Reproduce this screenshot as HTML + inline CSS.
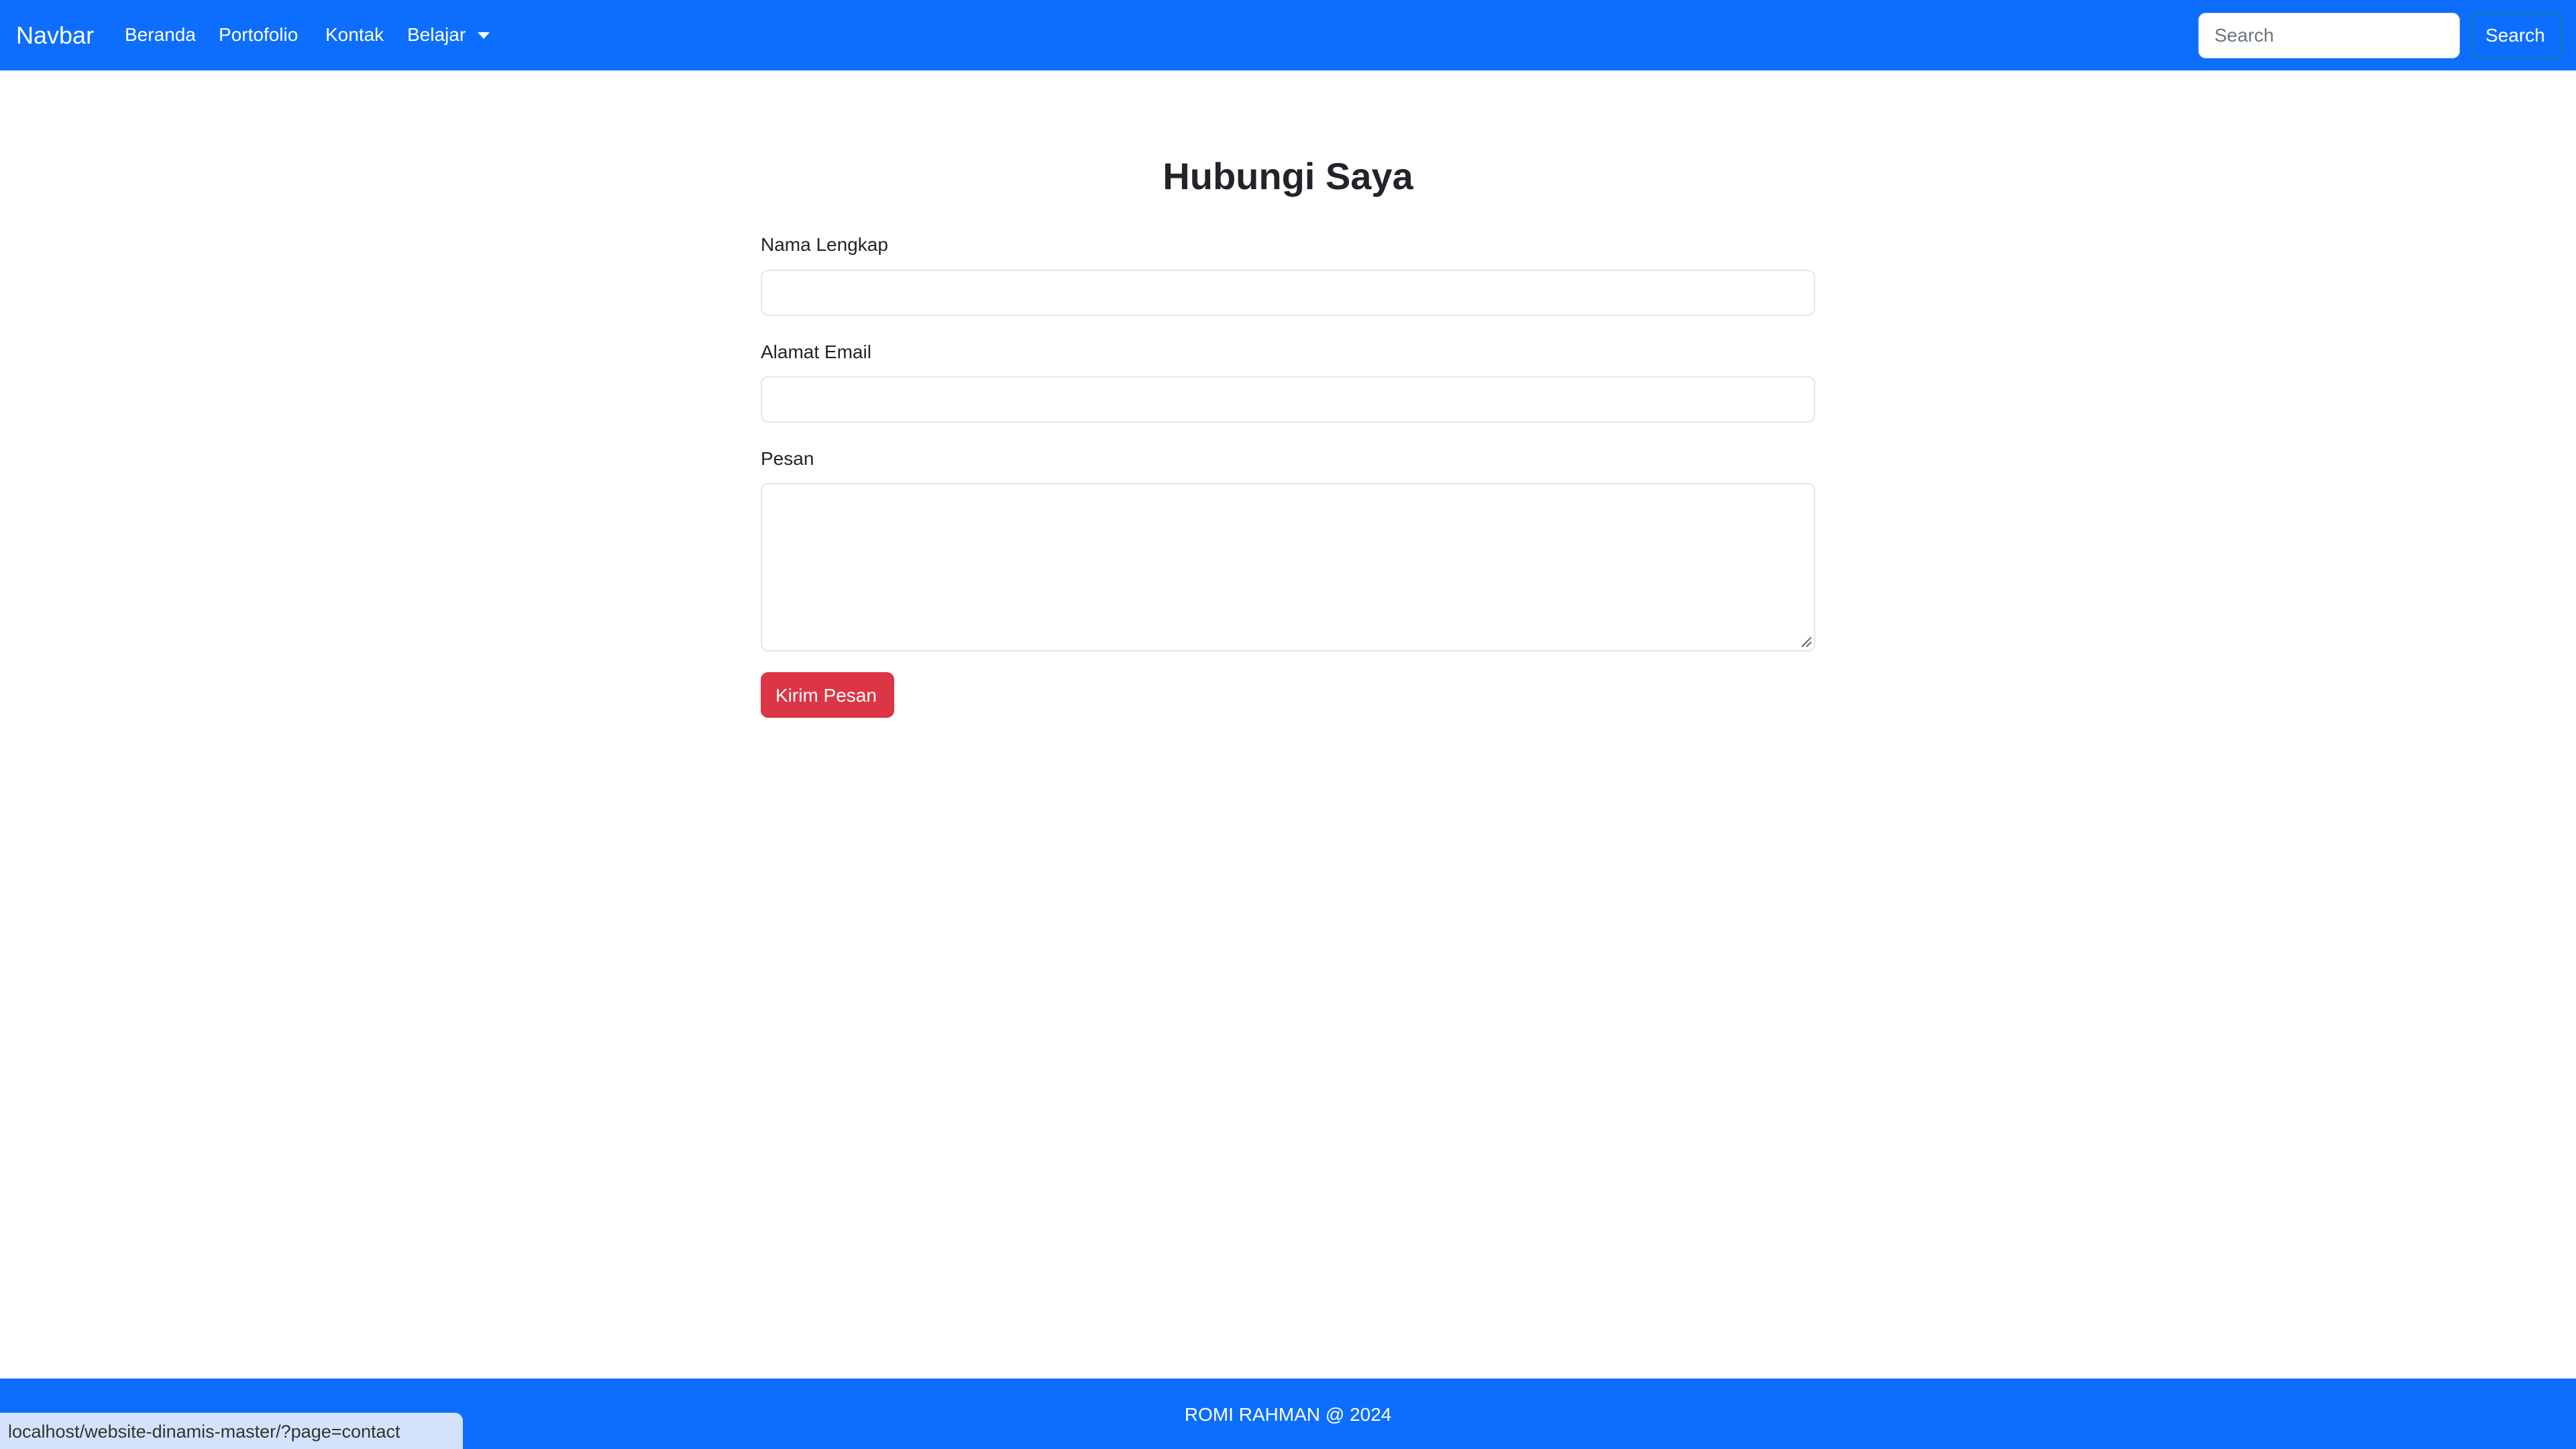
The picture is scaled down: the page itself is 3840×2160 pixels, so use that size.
<!DOCTYPE html>
<html><head><meta charset="utf-8"><style>
*{margin:0;padding:0;box-sizing:border-box}
body{width:3840px;height:2160px;position:relative;background:#fff;font-family:"Liberation Sans",sans-serif;overflow:hidden;color:#212529}
.a{position:absolute;white-space:nowrap}
.nav{position:absolute;left:0;top:0;width:3840px;height:105px;background:#0d6efd}
.nl{color:#fff;font-size:28px;top:36px}
.foot{position:absolute;left:0;top:2055px;width:3840px;height:105px;background:#0d6efd}
.lbl{font-size:28px;left:1134px}
.inp{position:absolute;left:1134px;width:1572px;border:2px solid #e3e6ea;border-radius:11px;background:#fff}
</style></head><body>
<div class="nav"></div>
<div class="a" style="left:24px;top:32px;font-size:36px;color:#fff">Navbar</div>
<div class="a nl" style="left:186px">Beranda</div>
<div class="a nl" style="left:326px">Portofolio</div>
<div class="a nl" style="left:485px">Kontak</div>
<div class="a nl" style="left:607px">Belajar</div>
<div class="a" style="left:712px;top:48px;width:0;height:0;border-left:9px solid transparent;border-right:9px solid transparent;border-top:10px solid #fff"></div>
<div class="a" style="left:3277px;top:19px;width:390px;height:68px;background:#fff;border-radius:11px;border:1px solid #ced4da"></div>
<div class="a" style="left:3301px;top:37px;font-size:28px;color:#6c757d">Search</div>
<div class="a" style="left:3683px;top:19px;width:135px;height:68px;border:1px solid #198754;border-radius:11px"></div>
<div class="a" style="left:3705px;top:37px;font-size:28px;color:#fff">Search</div>

<div class="a" style="left:0;width:3840px;text-align:center;top:230px;font-size:56px;font-weight:bold;color:#212529">Hubungi Saya</div>
<div class="a lbl" style="top:349px">Nama Lengkap</div>
<div class="inp" style="top:402px;height:69px"></div>
<div class="a lbl" style="top:509px">Alamat Email</div>
<div class="inp" style="top:561px;height:69px"></div>
<div class="a lbl" style="top:668px">Pesan</div>
<div class="inp" style="top:720px;height:251px"></div>
<svg class="a" style="left:2684px;top:948px" width="18" height="18"><path d="M2 16L16 2M9 16L16 9" stroke="#666" stroke-width="2"/></svg>
<div class="a" style="left:1134px;top:1002px;width:199px;height:68px;background:#dc3545;border-radius:11px"></div>
<div class="a" style="left:1156px;top:1021px;font-size:28px;color:#fff">Kirim Pesan</div>

<div class="foot"></div>
<div class="a" style="left:0;width:3840px;text-align:center;top:2093px;font-size:28px;color:#fff">ROMI RAHMAN @ 2024</div>
<div class="a" style="left:0;top:2106px;width:690px;height:54px;background:#d3e3fd;border-top-right-radius:12px"></div>
<div class="a" style="left:12px;top:2119px;font-size:27px;color:#333">localhost/website-dinamis-master/?page=contact</div>
</body></html>
